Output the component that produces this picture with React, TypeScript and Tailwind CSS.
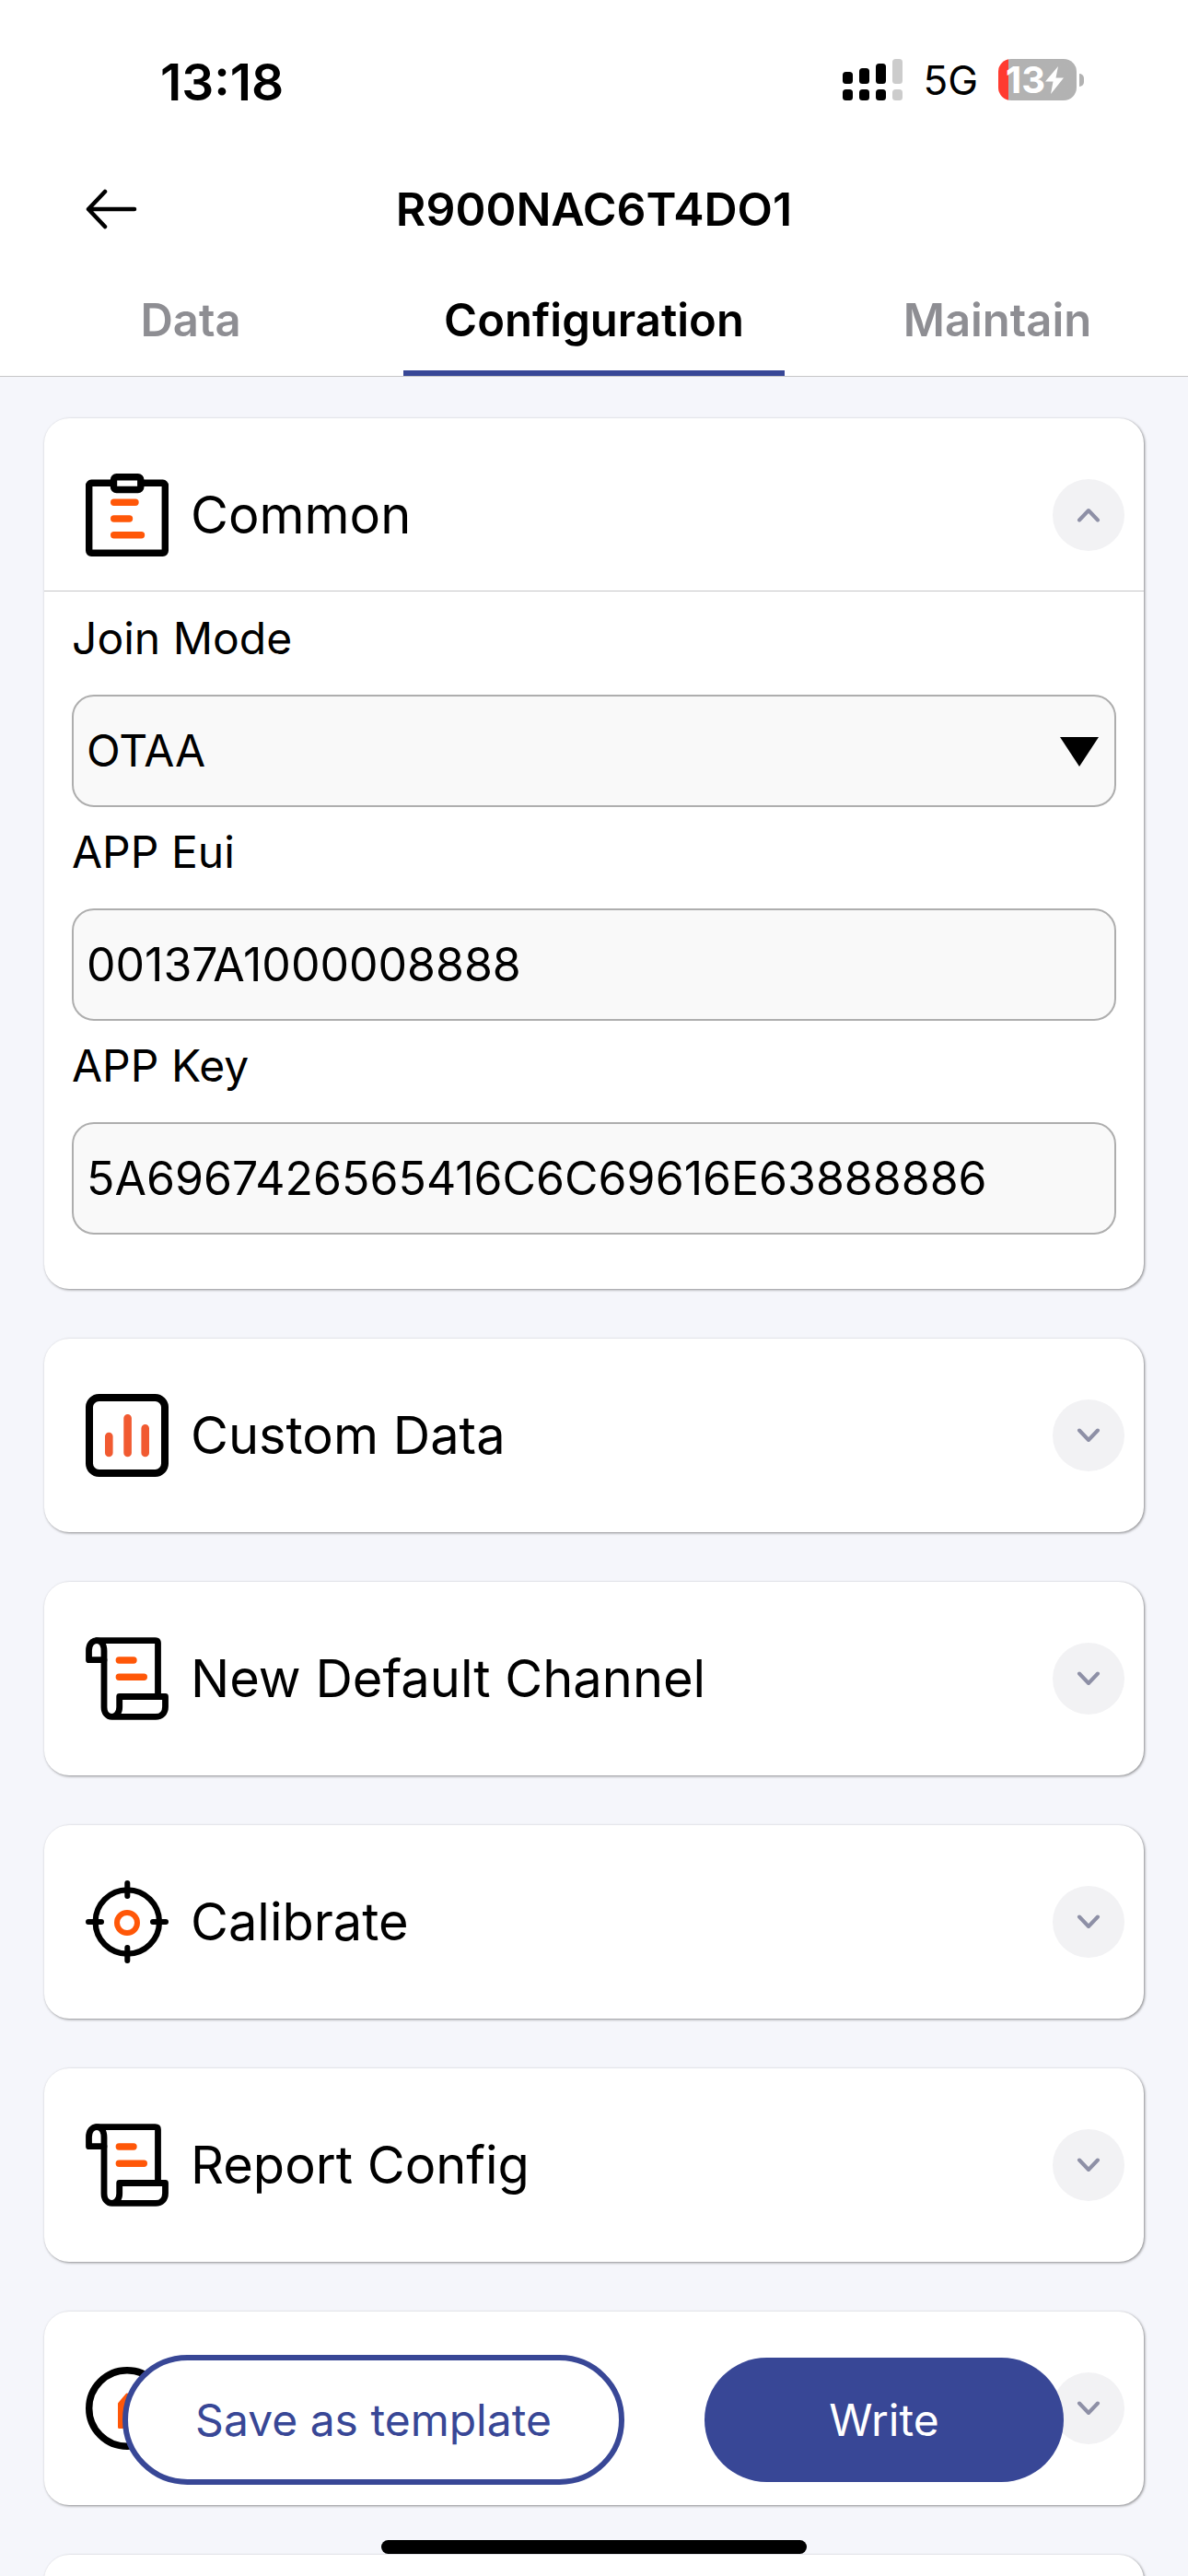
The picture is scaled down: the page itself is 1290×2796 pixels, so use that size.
import { useState, type ReactNode } from "react";

type IconName = "clipboard" | "chart" | "scroll" | "target" | "home";

interface Section {
  id: string;
  title: string;
  icon: IconName;
}

const TABS = ["Data", "Configuration", "Maintain"];

const SECTIONS: Section[] = [
  { id: "common", title: "Common", icon: "clipboard" },
  { id: "custom-data", title: "Custom Data", icon: "chart" },
  { id: "default-channel", title: "New Default Channel", icon: "scroll" },
  { id: "calibrate", title: "Calibrate", icon: "target" },
  { id: "report-config", title: "Report Config", icon: "scroll" },
  { id: "section-6", title: "", icon: "home" },
  { id: "section-7", title: "", icon: "scroll" },
];

export default function App() {
  const [tab, setTab] = useState("Configuration");
  const [openId, setOpenId] = useState<string | null>("common");
  const [joinMode, setJoinMode] = useState("OTAA");
  const [appEui, setAppEui] = useState("00137A1000008888");
  const [appKey, setAppKey] = useState("5A6967426565416C6C69616E63888886");

  return (
    <div className="relative flex h-screen flex-col overflow-hidden bg-[#f5f6fb] font-[Inter,sans-serif] text-black">
      <header className="shrink-0 border-b border-[#c6c6c8] bg-white">
        <StatusBar />

        <div className="grid h-[100px] grid-cols-[1fr_auto_1fr] items-center px-[92px]">
          <button type="button" aria-label="Back" className="justify-self-start">
            <svg viewBox="0 0 58 44" className="h-11 w-[58px]" fill="none" stroke="currentColor" strokeWidth="4.5" strokeLinecap="round" strokeLinejoin="round">
              <path d="M54 22H4M22 3L4 22l18 19" />
            </svg>
          </button>
          <h1 className="text-[50px] leading-[60px] font-semibold">R900NAC6T4DO1</h1>
        </div>

        <nav className="grid h-[131px] grid-cols-3 gap-6">
          {TABS.map((name) => (
            <button
              key={name}
              type="button"
              onClick={() => setTab(name)}
              className={`border-b-[6px] pt-4 text-[49px] leading-[60px] font-semibold ${
                tab === name ? "border-[#384796] text-black" : "border-transparent text-[#8e8e93]"
              }`}
            >
              {name}
            </button>
          ))}
        </nav>
      </header>

      <main className="flex min-h-0 flex-1 flex-col gap-[54px] overflow-y-auto px-12 pt-[45px] [scrollbar-width:none]">
        {SECTIONS.map((s) => (
          <SectionCard
            key={s.id}
            section={s}
            open={openId === s.id}
            onToggle={() => setOpenId(openId === s.id ? null : s.id)}
          >
            {s.id === "common" && (
              <>
                <Field id="join-mode" label="Join Mode">
                  <div className="relative">
                    <select
                      id="join-mode"
                      value={joinMode}
                      onChange={(e) => setJoinMode(e.target.value)}
                      className="block h-[122px] w-full appearance-none rounded-3xl border-2 border-[#aeaeae] bg-[#f9f9f9] px-[14px] text-[48px]"
                    >
                      <option>OTAA</option>
                    </select>
                    <svg viewBox="0 0 42 32" className="pointer-events-none absolute top-[46px] right-[19px] h-8 w-[42px]">
                      <path d="M0 0h42L21 32z" />
                    </svg>
                  </div>
                </Field>
                <Field id="app-eui" label="APP Eui">
                  <TextInput id="app-eui" value={appEui} onChange={setAppEui} />
                </Field>
                <Field id="app-key" label="APP Key">
                  <TextInput id="app-key" value={appKey} onChange={setAppKey} />
                </Field>
              </>
            )}
          </SectionCard>
        ))}
      </main>

      <div className="absolute inset-x-0 bottom-6 flex flex-col items-center gap-[60px]">
        <div className="flex w-full items-center justify-between pr-[135px] pl-[133px]">
          <button
            type="button"
            className="h-[141px] w-[545px] rounded-full border-[6px] border-[#384796] bg-white text-[48px] text-[#384796]"
          >
            Save as template
          </button>
          <button type="button" className="h-[135px] w-[390px] rounded-full bg-[#384796] text-[48px] text-white">
            Write
          </button>
        </div>
        <div className="h-[15px] w-[462px] rounded-full bg-black" />
      </div>
    </div>
  );
}

function StatusBar() {
  return (
    <div className="flex h-[177px] items-center justify-between pr-[113px] pl-[174px]">
      <span className="text-[55px] leading-[60px] font-semibold">13:18</span>
      <div className="flex items-center gap-[22px] pb-1">
        <svg viewBox="0 0 65 45" className="h-[45px] w-[65px]">
          <rect x="0" y="14" width="11" height="13" rx="3.5" />
          <rect x="18" y="10" width="11" height="17" rx="3.5" />
          <rect x="36" y="5" width="11" height="22" rx="3.5" />
          <rect x="54" y="0" width="11" height="27" rx="3.5" fill="#cccccc" />
          <rect x="0" y="33" width="11" height="12" rx="3.5" />
          <rect x="18" y="33" width="11" height="12" rx="3.5" />
          <rect x="36" y="33" width="11" height="12" rx="3.5" />
          <rect x="54" y="33" width="11" height="12" rx="3.5" fill="#cccccc" />
        </svg>
        <span className="text-[44px] leading-[48px]">5G</span>
        <div className="flex items-center gap-[3px]">
          <div className="flex h-[45px] w-[85px] items-center rounded-[14px] bg-linear-to-r from-[#ff3b30] from-[11px] to-[#b2b2b2] to-[11px] pl-2 text-white">
            <span className="text-[40px] leading-[48px] font-bold">13</span>
            <svg viewBox="0 0 20 30" className="h-[30px] w-5 shrink-0" fill="currentColor">
              <path d="M14 0L0 16.500h8.500L6 30 20 12.500h-8.500z" />
            </svg>
          </div>
          <div className="h-[14px] w-[5px] rounded-r-full bg-[#b2b2b2]" />
        </div>
      </div>
    </div>
  );
}

interface SectionCardProps {
  section: Section;
  open: boolean;
  onToggle: () => void;
  children?: ReactNode;
}

function SectionCard({ section, open, onToggle, children }: SectionCardProps) {
  return (
    <section className="shrink-0 rounded-[27px] bg-white shadow-[1px_1px_3px_rgba(0,0,0,0.45)]">
      <button
        type="button"
        aria-expanded={open}
        onClick={onToggle}
        className={`flex w-full items-center gap-6 pt-[60px] pr-[21px] pl-[45px] text-left ${
          open ? "border-b border-[#c6c6c8] pb-[37px]" : "pb-[60px]"
        }`}
      >
        <SectionIcon name={section.icon} />
        <span className="flex-1 text-[56px] leading-[72px]">{section.title}</span>
        <span className="flex size-[78px] items-center justify-center rounded-full bg-[#f2f2f4]">
          <svg
            viewBox="0 0 26 16"
            className={`h-4 w-[26px] ${open ? "" : "rotate-180"}`}
            fill="none"
            stroke="#8e90a6"
            strokeWidth="4"
            strokeLinecap="round"
            strokeLinejoin="round"
          >
            <path d="M3 13.500L13 3l10 10.500" />
          </svg>
        </span>
      </button>
      {open && <div className="px-[30px] pt-[2px] pb-[59px]">{children}</div>}
    </section>
  );
}

function Field({ id, label, children }: { id: string; label: string; children: ReactNode }) {
  return (
    <div>
      <label htmlFor={id} className="flex h-[110px] items-center pb-3 text-[48px] leading-[60px]">
        {label}
      </label>
      {children}
    </div>
  );
}

function TextInput({ id, value, onChange }: { id: string; value: string; onChange: (v: string) => void }) {
  return (
    <input
      id={id}
      type="text"
      value={value}
      onChange={(e) => onChange(e.target.value)}
      className="block h-[122px] w-full rounded-3xl border-2 border-[#aeaeae] bg-[#f9f9f9] px-[14px] text-[50px]"
    />
  );
}

function SectionIcon({ name }: { name: IconName }) {
  return (
    <svg viewBox="0 0 90 90" className="size-[90px] shrink-0" fill="none" stroke="#000" strokeWidth="7.4" strokeLinecap="round" strokeLinejoin="round">
      {name === "clipboard" && (
        <>
          <rect x="3.700" y="10.300" width="82.600" height="76" rx="2.500" />
          <rect x="30.500" y="3.700" width="29.300" height="13.800" rx="3" fill="#fff" />
          <path stroke="#ff5708" d="M30.700 31.300H54M30.700 49h16.800M30.700 66.700h29.800" />
        </>
      )}
      {name === "chart" && (
        <>
          <rect x="4" y="4" width="82" height="82" rx="10.500" strokeWidth="8" />
          <path stroke="#f15a31" strokeWidth="8.600" d="M25.300 46v18M45.600 26.300V64M64.700 37.300V64" />
        </>
      )}
      {name === "scroll" && (
        <>
          <path strokeWidth="6.800" d="M20 24.700H3.500V14.500C3.500 8 7 3.600 12 3.600h63.500c2 0 3 1 3 3V62" />
          <path
            strokeWidth="6.800"
            d="M12 3.600C17 3.600 20 8 20 15v61c0 6 3.500 10.400 8.500 10.400H76c6.500 0 10.500-4.400 10.500-11v-10.900H36.700V76c0 6-3.700 10.400-8.200 10.400"
          />
          <path stroke="#ff5708" d="M36.300 25H52M36.300 43.300h27" />
        </>
      )}
      {name === "target" && (
        <>
          <circle cx="45.300" cy="45" r="34.700" strokeWidth="6.200" />
          <path strokeWidth="6" d="M45.300 3v14M45.300 73v14M3 45h14M73 45h14" />
          <circle cx="45" cy="46" r="11" stroke="#ff5708" strokeWidth="6" />
        </>
      )}
      {name === "home" && (
        <>
          <circle cx="45" cy="45" r="41.300" />
          <path fill="#ff5708" stroke="#ff5708" strokeWidth="3" d="M36.500 65.500V40L45 30l8.500 10v25.500z" />
        </>
      )}
    </svg>
  );
}
